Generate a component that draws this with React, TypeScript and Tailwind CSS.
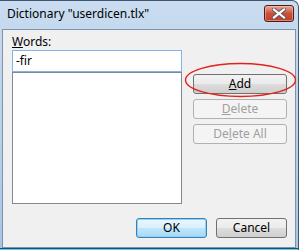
const font = { fontFamily: '"Noto Sans", "Liberation Sans", sans-serif' };

const CloseButton = () => (
  <div className="w-[30px] h-[17px] rounded-[3px] border border-[#4f1d15] bg-gradient-to-b from-[#e8a899] via-[#c9503c] to-[#c0402a] flex items-center justify-center shadow-[inset_0_0_0_1px_rgba(255,200,190,0.5)]">
    <svg width="14" height="11" viewBox="0 0 14 11">
      <path d="M2 1.5 L12 9.5 M12 1.5 L2 9.5" stroke="#5a5a5a" strokeWidth="4" strokeLinecap="square" />
      <path d="M2 1.5 L12 9.5 M12 1.5 L2 9.5" stroke="#ffffff" strokeWidth="2.2" strokeLinecap="square" />
    </svg>
  </div>
);

const Button = ({
  children,
  disabled,
  isDefault,
  className = "",
}: {
  children: React.ReactNode;
  disabled?: boolean;
  isDefault?: boolean;
  className?: string;
}) => {
  let look =
    "border-[#707070] bg-[linear-gradient(#f2f2f2_0%,#ebebeb_50%,#dddddd_51%,#cfcfcf_100%)] text-black";
  if (disabled)
    look = "border-[#adb2b5] bg-[#f4f4f4] text-[#a0a0a0]";
  if (isDefault)
    look =
      "border-[#3c7fb1] bg-[linear-gradient(#eaf6fd_0%,#d9f0fc_50%,#bee6fd_51%,#a7d9f5_100%)] text-black shadow-[inset_0_0_0_1px_#8fd2f5]";
  return (
    <div
      className={`h-[20px] rounded-[3px] border flex items-center justify-center text-[12px] leading-none ${look} ${className}`}
    >
      {children}
    </div>
  );
};

export default function App() {
  return (
    <div className="w-[300px] h-[250px] bg-white overflow-hidden" style={font}>
      <div className="w-[299px] h-[250px] rounded-tr-[7px] border-t border-r border-[#3f5570] bg-gradient-to-b from-[#c9dcf0] to-[#a9c5e4] flex flex-col">
        {/* title bar */}
        <div className="h-[28px] flex items-start justify-between pl-[7px] pr-[4px]">
          <span className="text-[12px] text-black mt-[7px] leading-none">
            Dictionary "userdicen.tlx"
          </span>
          <div className="mt-[4px]">
            <CloseButton />
          </div>
        </div>

        {/* client area */}
        <div className="ml-[2px] mr-[2px] h-[219px] border border-[#7d92ab] bg-[#f0f0f0] flex flex-col pl-[9px] pt-[4px] text-[12px] text-black">
          <div className="h-[16px] leading-[16px]">
            <span className="underline">W</span>ords:
          </div>
          <div className="flex">
            <div className="flex flex-col w-[170px]">
              <div className="h-[22px] border border-[#7eb4ea] bg-white flex items-center pl-[3px]">
                -fir
              </div>
              <div className="h-[132px] border border-[#828790] bg-white" />
            </div>
            <div className="ml-[11px] pt-[24px] flex flex-col gap-[5px] w-[94px]">
              <div className="relative">
                <Button>
                  <span className="underline">A</span>dd
                </Button>
                <svg
                  className="absolute left-[-9px] top-[-12px]"
                  width="113"
                  height="36"
                  viewBox="0 0 113 36"
                >
                  <ellipse cx="56.5" cy="18" rx="55" ry="16.5" fill="none" stroke="#e2231a" strokeWidth="1.4" />
                </svg>
              </div>
              <Button disabled>
                <span className="underline">D</span>elete
              </Button>
              <Button disabled>
                De<span className="underline">l</span>ete All
              </Button>
            </div>
          </div>
          <div className="flex justify-end gap-[9px] pr-[8px] mt-[14px]">
            <Button isDefault className="w-[71px]">
              OK
            </Button>
            <Button className="w-[71px]">Cancel</Button>
          </div>
        </div>
        <div className="flex-1 border-t border-[#2c4a6a] bg-[#5ec7ea]" />
      </div>
    </div>
  );
}
